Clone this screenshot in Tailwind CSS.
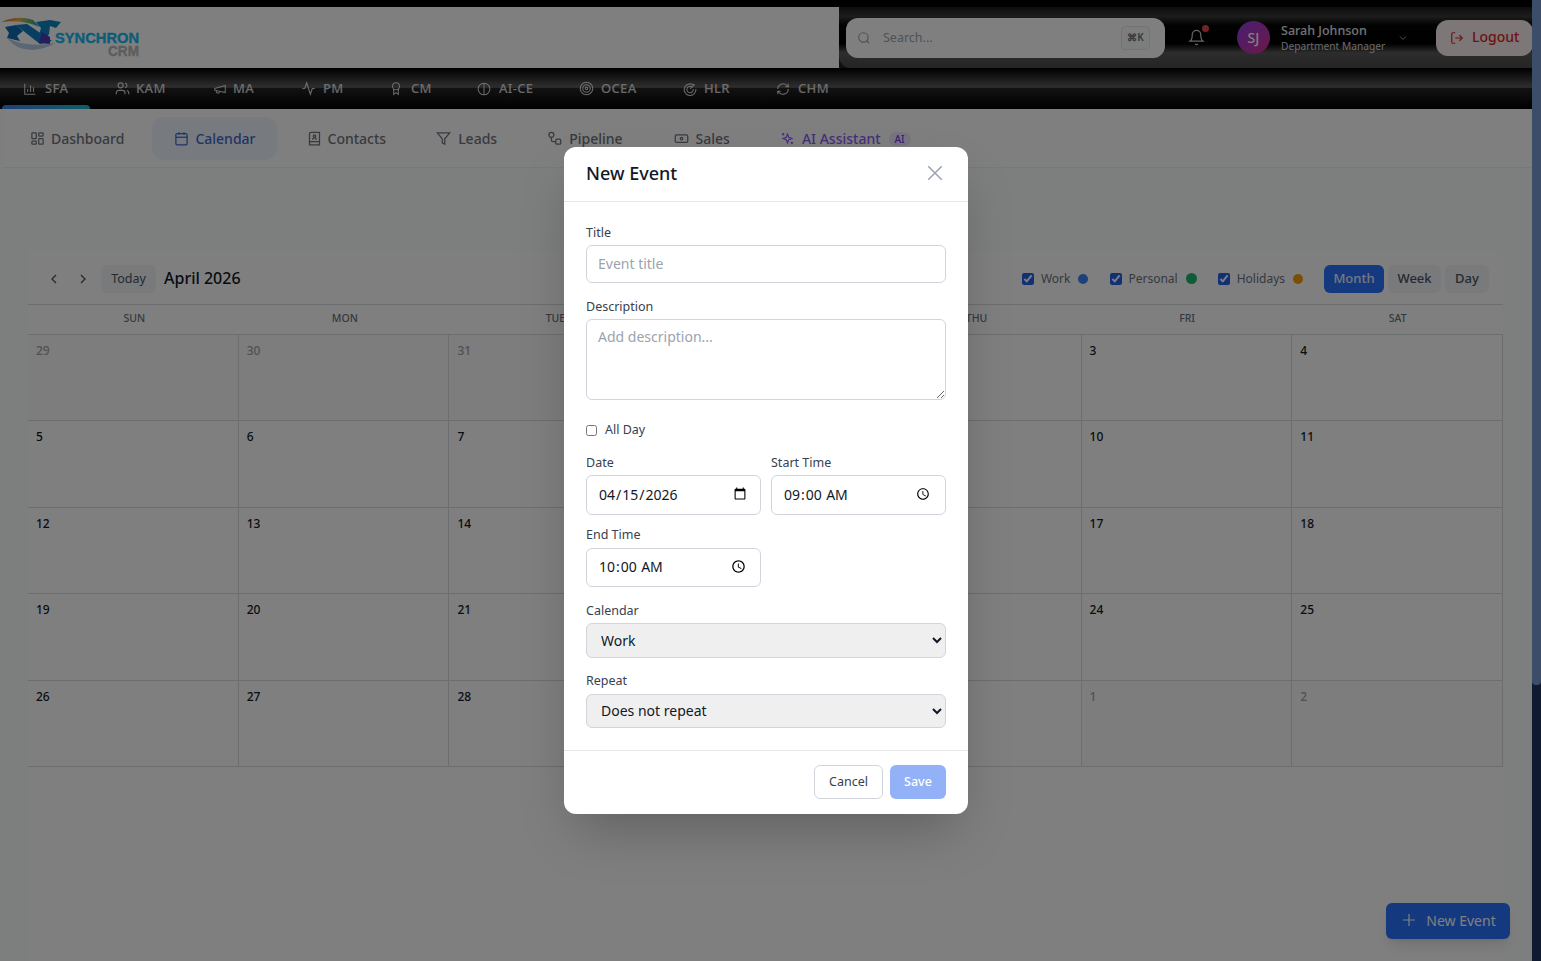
<!DOCTYPE html>
<html lang="en">
<head>
  <meta charset="UTF-8">
  <title>Synchron CRM - Calendar</title>
  <script src="https://cdn.jsdelivr.net/npm/@tailwindcss/browser@4"></script>
</head>
<body class="h-screen overflow-hidden bg-[#0f1a30] font-['Noto_Sans',sans-serif]">
<div class="flex h-screen">
  <div class="relative w-[1532px] h-full overflow-hidden bg-[#fbfdfc]">

    <!-- top header -->
    <header class="h-[68px] pt-[7px] bg-[linear-gradient(#000,#222)] flex">
      <div class="w-[839px] shrink-0 h-[61px] bg-white">
        <svg width="142" height="50" viewBox="0 14 142 50" class="mt-[7px] block">
          <defs>
            <linearGradient id="arc" x1="0" x2="1" y1="0" y2="0"><stop offset="0" stop-color="#e06a30"/><stop offset=".45" stop-color="#e8b040"/><stop offset=".8" stop-color="#50b080"/><stop offset="1" stop-color="#1090c0"/></linearGradient>
          </defs>
          <path d="M1.5 22 C10 17.5 22 16 33 20 L40 27 C28 21.5 12 20 1.5 22Z" fill="url(#arc)"/>
          <path d="M36 22 L50 20 L61 22 L56 28 L50 26 L49 34 L42 44 L38 38 L41 28Z" fill="#0c86c0"/>
          <path d="M16 25 L27 24 L52 41 L40 44 L26 33Z" fill="#0e7cc4"/>
          <path d="M5 27 L16 25 L23 31 L17 36 L20 41 L7 38 L9 33Z" fill="#0e6cb0"/>
          <path d="M42 32 L50 37 L50 44 L39 43Z" fill="#4a3ab8"/>
          <path d="M7 38 C18 43 30 47 55 43 C45 50 28 52 18 47 C14 45 10 42 7 38Z" fill="#b4cce4"/>
          <text x="55" y="43" font-family="Liberation Sans" font-weight="700" font-size="15.5" stroke="#14b8f0" stroke-width=".35" textLength="84" lengthAdjust="spacingAndGlyphs" fill="#14b8f0">SYNCHRON</text>
          <text x="108" y="56" font-family="Liberation Sans" font-weight="700" font-size="15" stroke="#b8b8b8" stroke-width=".3" textLength="31" lengthAdjust="spacingAndGlyphs" fill="#b8b8b8">CRM</text>
        </svg>
      </div>
      <div class="flex-1 min-w-0 h-[61px] overflow-hidden rounded-bl-xl bg-[linear-gradient(#1a1a1a_0%,#3a3a3a_15%,#050505_30%,#000_60%,#5a5a5a_75%,#4a4a4a_100%)] flex items-center pl-[7px]">
        <div class="w-[319px] h-10 shrink-0 rounded-xl bg-white flex items-center pl-[11px] pr-[15px] text-[#9ca3af]">
          <svg class="w-[14px] h-[14px] mr-[12px] shrink-0" viewBox="0 0 24 24" fill="none" stroke="currentColor" stroke-width="2"><circle cx="11" cy="11" r="8"/><path d="m21 21-4.3-4.3"/></svg>
          <span class="flex-1 pt-[2px] text-[12.5px]">Search...</span>
          <span class="w-[29px] h-6 border border-[#e5e7eb] rounded bg-[#f9fafb] flex items-center justify-center text-[10px] font-semibold text-[#6b7280]">⌘K</span>
        </div>
        <div class="relative ml-[23px] w-4 h-5 shrink-0 text-white/80">
          <svg class="w-[17px] h-[19px]" viewBox="0 0 24 24" fill="none" stroke="currentColor" stroke-width="1.7"><path d="M6 8a6 6 0 0 1 12 0c0 7 3 9 3 9H3s3-2 3-9"/><path d="M10.3 21a1.94 1.94 0 0 0 3.4 0"/></svg>
          <span class="absolute -top-[3px] left-[14px] w-[7px] h-[7px] rounded-full bg-[#ef4444]"></span>
        </div>
        <div class="ml-[33px] w-[33px] h-[33px] shrink-0 rounded-full bg-[linear-gradient(135deg,#8b3fe0,#db2f9a)] flex items-center justify-center text-white text-[14px] font-medium">SJ</div>
        <div class="ml-[11px] w-[115px] pt-[1px] shrink-0">
          <div class="text-[12.5px] font-medium text-[#e5e7eb] leading-[15px]">Sarah Johnson</div>
          <div class="mt-[1px] text-[10.2px] text-[#d1d5db] leading-[15px] whitespace-nowrap">Department Manager</div>
        </div>
        <svg class="ml-[1px] w-3 h-3 shrink-0 text-[#9ca3af]" viewBox="0 0 24 24" fill="none" stroke="currentColor" stroke-width="2"><path d="m6 9 6 6 6-6"/></svg>
        <div class="ml-[27px] w-[97px] h-9 shrink-0 rounded-xl bg-[#fbeeee] flex items-center pl-[14px] gap-[8px] text-[#dc2626] text-[14px] font-medium">
          <svg class="w-[14px] h-[14px]" viewBox="0 0 24 24" fill="none" stroke="currentColor" stroke-width="2"><path d="M9 21H5a2 2 0 0 1-2-2V5a2 2 0 0 1 2-2h4"/><path d="m16 17 5-5-5-5"/><path d="M21 12H9"/></svg>
          <span class="-mt-[2px]">Logout</span>
        </div>
      </div>
    </header>

    <!-- module nav -->
    <nav class="h-[41px] bg-[linear-gradient(#000_0%,#5e5e5e_47%,#242424_50%,#000_100%)] flex gap-1 pl-[2px] text-[13px] font-medium tracking-wide text-white/80">
      <a class="relative h-full w-[88px] pl-[21px] flex items-center gap-2">
        <svg class="w-[14px] h-[14px]" viewBox="0 0 24 24" fill="none" stroke="currentColor" stroke-width="1.8"><path d="M3 3v18h18"/><path d="M8 17v-5M13 17V6M18 17v-8"/></svg>SFA
        <span class="absolute left-0 right-0 bottom-0 h-1 rounded-t bg-[linear-gradient(90deg,#3b82f6,#22b8cf)]"></span>
      </a>
      <a class="h-full w-[94px] pl-[21px] flex items-center gap-[6px]">
        <svg class="w-[15px] h-[15px]" viewBox="0 0 24 24" fill="none" stroke="currentColor" stroke-width="1.8"><path d="M16 21v-2a4 4 0 0 0-4-4H6a4 4 0 0 0-4 4v2"/><circle cx="9" cy="7" r="4"/><path d="M22 21v-2a4 4 0 0 0-3-3.9M16 3.1a4 4 0 0 1 0 7.8"/></svg>KAM
      </a>
      <a class="h-full w-[84px] pl-[21px] flex items-center gap-[6px]">
        <svg class="w-[14px] h-[14px]" viewBox="0 0 24 24" fill="none" stroke="currentColor" stroke-width="1.8"><path d="m3 11 18-5v12L3 14z"/><path d="M11.6 16.8a3 3 0 1 1-5.8-1.6"/></svg>MA
      </a>
      <a class="h-full w-[84px] pl-[21px] flex items-center gap-[7px]">
        <svg class="w-[15px] h-[15px]" viewBox="0 0 24 24" fill="none" stroke="currentColor" stroke-width="1.8"><path d="M22 12h-4l-3 9L9 3l-3 9H2"/></svg>PM
      </a>
      <a class="h-full w-[84px] pl-[21px] flex items-center gap-[8px]">
        <svg class="w-[14px] h-[15px]" viewBox="0 0 24 24" fill="none" stroke="currentColor" stroke-width="1.8"><circle cx="12" cy="8" r="6"/><path d="M8 13v9l4-3 4 3v-9"/></svg>CM
      </a>
      <a class="h-full w-[98px] pl-[21px] flex items-center gap-[8px]">
        <svg class="w-[14px] h-[14px]" viewBox="0 0 24 24" fill="none" stroke="currentColor" stroke-width="1.8"><circle cx="12" cy="12" r="10"/><path d="M12 2v20"/></svg>AI-CE
      </a>
      <a class="h-full w-[100px] pl-[21px] flex items-center gap-[7px]">
        <svg class="w-[15px] h-[15px]" viewBox="0 0 24 24" fill="none" stroke="currentColor" stroke-width="1.8"><circle cx="12" cy="12" r="10"/><circle cx="12" cy="12" r="6"/><circle cx="12" cy="12" r="2"/></svg>OCEA
      </a>
      <a class="h-full w-[89px] pl-[21px] flex items-center gap-[7px]">
        <svg class="w-[14px] h-[14px]" viewBox="0 0 24 24" fill="none" stroke="currentColor" stroke-width="1.8"><path d="M19 6a10 10 0 1 0 3 6"/><path d="M16 9a5.5 5.5 0 1 0 1.5 3"/><path d="m12 12 8-8"/></svg>HLR
      </a>
      <a class="h-full w-[92px] pl-[21px] flex items-center gap-[8px]">
        <svg class="w-[14px] h-[14px]" viewBox="0 0 24 24" fill="none" stroke="currentColor" stroke-width="1.8"><path d="M3 12a9 9 0 0 1 15-6.7L21 8"/><path d="M21 3v5h-5"/><path d="M21 12a9 9 0 0 1-15 6.7L3 16"/><path d="M3 21v-5h5"/></svg>CHM
      </a>
    </nav>

    <!-- page tabs -->
    <div class="h-[59px] ml-[3px] bg-white rounded-tl-lg border-b border-[#eef0f2] flex items-center gap-[6px] pl-[5px] text-[14px] font-medium text-[#6f747c]">
      <a class="h-[43px] pl-[22px] pr-[22px] pt-[1px] flex items-center gap-[6px]">
        <svg class="w-[15px] h-[15px]" viewBox="0 0 24 24" fill="none" stroke="currentColor" stroke-width="2"><rect x="3" y="3" width="7" height="9" rx="1"/><rect x="14" y="3" width="7" height="5" rx="1"/><rect x="14" y="12" width="7" height="9" rx="1"/><rect x="3" y="16" width="7" height="5" rx="1"/></svg>Dashboard
      </a>
      <a class="h-[43px] pl-[22px] pr-[21px] pt-[1px] rounded-xl bg-[#eff6ff] text-[#3f68cc] flex items-center gap-[6px]">
        <svg class="w-[15px] h-[15px]" viewBox="0 0 24 24" fill="none" stroke="currentColor" stroke-width="2"><path d="M8 2v4M16 2v4"/><rect x="3" y="4" width="18" height="18" rx="2"/><path d="M3 10h18"/></svg>Calendar
      </a>
      <a class="h-[43px] pl-[24px] pr-[22px] pt-[1px] flex items-center gap-[6px]">
        <svg class="w-[15px] h-[15px]" viewBox="0 0 24 24" fill="none" stroke="currentColor" stroke-width="2"><path d="M4 19.5A2.5 2.5 0 0 1 6.5 17H20V2H6.5A2.5 2.5 0 0 0 4 4.5V22h16v-5"/><circle cx="12" cy="8" r="2"/><path d="M9 14a3 3 0 0 1 6 0"/></svg>Contacts
      </a>
      <a class="h-[43px] px-[22px] pt-[1px] flex items-center gap-[7px]">
        <svg class="w-[15px] h-[15px]" viewBox="0 0 24 24" fill="none" stroke="currentColor" stroke-width="2"><path d="M22 3H2l8 9.5V19l4 2v-8.5z"/></svg>Leads
      </a>
      <a class="h-[43px] px-[22px] pt-[1px] flex items-center gap-[7px]">
        <svg class="w-[15px] h-[15px]" viewBox="0 0 24 24" fill="none" stroke="currentColor" stroke-width="2"><circle cx="7" cy="6" r="4"/><path d="M7 10v4a3 3 0 0 0 3 3h3"/><rect x="14" y="13" width="8" height="8" rx="2"/></svg>Pipeline
      </a>
      <a class="h-[43px] pl-[23px] pr-[22px] pt-[1px] flex items-center gap-[7px]">
        <svg class="w-[15px] h-[15px]" viewBox="0 0 24 24" fill="none" stroke="currentColor" stroke-width="2"><rect x="2" y="6" width="20" height="12" rx="2"/><circle cx="12" cy="12" r="2"/><path d="M6 12h.01M18 12h.01"/></svg>Sales
      </a>
      <a class="h-[43px] px-[22px] pt-[1px] flex items-center gap-[7px] text-[#8b5cf6]">
        <svg class="w-[15px] h-[15px]" viewBox="0 0 24 24" fill="none" stroke="currentColor" stroke-width="2"><path d="m12 5 2 5 5 2-5 2-2 5-2-5-5-2 5-2z"/><path d="M5 3v4M3 5h4M19 17v4M17 19h4"/></svg>AI Assistant
        <span class="ml-[1px] px-[6px] rounded-full bg-[#ede9fe] text-[10px] leading-[14px] text-[#7c3aed]">AI</span>
      </a>
    </div>

    <!-- calendar -->
    <main class="ml-[28px] mr-[29px] mt-[82px] h-full bg-white">
      <div class="h-[55px] pt-[3px] flex items-center pl-[18px] pr-[14px] border-b border-[#d8dadd]">
        <svg class="w-[16px] h-[16px] text-[#4b5563]" viewBox="0 0 24 24" fill="none" stroke="currentColor" stroke-width="2"><path d="m15 18-6-6 6-6"/></svg>
        <svg class="ml-[13px] w-[16px] h-[16px] text-[#4b5563]" viewBox="0 0 24 24" fill="none" stroke="currentColor" stroke-width="2"><path d="m9 18 6-6-6-6"/></svg>
        <button class="ml-[10px] w-[55px] h-7 pt-[2px] rounded-md bg-[#f3f4f6] text-[12.5px] text-[#4b5563]">Today</button>
        <h2 class="ml-2 -mt-[2px] text-[16px] font-medium text-[#111827]">April 2026</h2>
        <label class="ml-auto flex items-center text-[12px] text-[#6b7280]"><input type="checkbox" checked class="w-[12px] h-[12px] accent-[#2563eb]"><span class="ml-[7px]">Work</span><span class="ml-2 w-[10px] h-[10px] rounded-full bg-[#3b82f6]"></span></label>
        <label class="ml-[22px] flex items-center text-[12px] text-[#6b7280]"><input type="checkbox" checked class="w-[12px] h-[12px] accent-[#2563eb]"><span class="ml-[6px]">Personal</span><span class="ml-2 w-[11px] h-[11px] rounded-full bg-[#22b573]"></span></label>
        <label class="ml-[21px] flex items-center text-[12px] text-[#6b7280]"><input type="checkbox" checked class="w-[12px] h-[12px] accent-[#2563eb]"><span class="ml-[7px]">Holidays</span><span class="ml-2 w-[10px] h-[10px] rounded-full bg-[#f59e0b]"></span></label>
        <button class="ml-[21px] w-[60px] h-7 rounded-md bg-[#2a72ff] text-[13px] font-medium text-white/90">Month</button>
        <button class="ml-1 w-[53px] h-7 rounded-md bg-[#f3f4f6] text-[13px] font-medium text-[#4b5563]">Week</button>
        <button class="ml-1 w-[44px] h-7 rounded-md bg-[#f3f4f6] text-[13px] font-medium text-[#4b5563]">Day</button>
      </div>
      <div class="grid grid-cols-7 h-[30px] pb-[2px] pl-[1px] items-center text-center text-[10.5px] font-medium text-[#6b7280] border-b border-[#d8dadd]">
        <div>SUN</div><div>MON</div><div>TUE</div><div>WED</div><div>THU</div><div>FRI</div><div>SAT</div>
      </div>
      <div id="grid" class="grid grid-cols-7 grid-rows-5 h-[432px]"></div>
    </main>

    <button class="absolute left-[1386px] top-[903px] w-[124px] h-9 pb-[2px] rounded-md bg-[#2a72ff] text-white text-[14px] flex items-center justify-center gap-[8px] shadow-lg">
      <svg class="w-[18px] h-[18px]" viewBox="0 0 24 24" fill="none" stroke="currentColor" stroke-width="1.6"><path d="M4 12h16M12 4v16"/></svg>New Event
    </button>

    <!-- modal overlay -->
    <div class="absolute inset-0 bg-black/50 flex items-center justify-center">
      <div class="w-[404px] h-[667px] bg-white rounded-xl shadow-2xl text-[#374151]">
        <div class="h-[55px] pb-[2px] flex items-center justify-between px-[22px] border-b border-[#e5e7eb]">
          <h3 class="text-[18px] font-medium text-[#111827]">New Event</h3>
          <svg class="w-[18px] h-[18px] mr-[2px] text-[#9ca3af]" viewBox="0 0 24 24" fill="none" stroke="currentColor" stroke-width="2"><path d="M3 3l18 18M21 3 3 21"/></svg>
        </div>
        <div class="px-[22px] pt-[22px] text-[12.5px]">
          <label class="block leading-[18px] mb-[3px]">Title</label>
          <input type="text" placeholder="Event title" class="block w-full h-[38px] pb-[2px] px-[11px] text-[14px] border border-[#d1d5db] rounded-md placeholder:text-[#9ca3af]">
          <label class="block mt-[15px] leading-[18px] mb-[3px]">Description</label>
          <textarea placeholder="Add description..." class="block w-full h-[81px] px-[11px] py-[6px] text-[14px] border border-[#d1d5db] rounded-md placeholder:text-[#9ca3af]"></textarea>
          <label class="mt-[21px] h-[18px] flex items-center gap-[8px]"><input type="checkbox" class="w-[11px] h-[11px]">All Day</label>
          <div class="grid grid-cols-2 gap-x-[10px] mt-[15px]">
            <div>
              <label class="block leading-[18px] mb-[3px]">Date</label>
              <input type="date" value="2026-04-15" class="block w-full h-10 pb-[2px] px-[11px] text-[14px] text-[#111827] border border-[#d1d5db] rounded-md">
            </div>
            <div>
              <label class="block leading-[18px] mb-[3px]">Start Time</label>
              <input type="time" value="09:00" class="block w-full h-10 pb-[2px] px-[11px] text-[14px] text-[#111827] border border-[#d1d5db] rounded-md">
            </div>
            <div class="mt-[11px]">
              <label class="block leading-[18px] mb-[4px]">End Time</label>
              <input type="time" value="10:00" class="block w-full h-[39px] pb-[2px] px-[11px] text-[14px] text-[#111827] border border-[#d1d5db] rounded-md">
            </div>
          </div>
          <label class="block mt-[15px] leading-[18px] mb-[3px]">Calendar</label>
          <select class="block w-full h-[35px] px-[10px] text-[14px] text-[#111827] bg-[#efefef] border border-[#d1d5db] rounded-md"><option>Work</option></select>
          <label class="block mt-[14px] leading-[18px] mb-[4px]">Repeat</label>
          <select class="block w-full h-[34px] pb-[2px] px-[10px] text-[14px] text-[#111827] bg-[#efefef] border border-[#d1d5db] rounded-md"><option>Does not repeat</option></select>
        </div>
        <div class="mt-[22px] h-[64px] pb-[2px] border-t border-[#e5e7eb] flex items-center justify-end gap-[7px] px-[22px] text-[12.5px]">
          <button class="w-[69px] h-[34px] pt-[2px] rounded-md border border-[#d1d5db] text-[#374151]">Cancel</button>
          <button class="w-[56px] h-[34px] pt-[2px] rounded-md bg-[#93b1f6] text-white font-medium">Save</button>
        </div>
      </div>
    </div>
  </div>

  <!-- scrollbar -->
  <div class="w-[9px] h-[685px] bg-[#3b4d68] rounded-b"></div>
</div>

<script>
  const days = [29,30,31,1,2,3,4,5,6,7,8,9,10,11,12,13,14,15,16,17,18,19,20,21,22,23,24,25,26,27,28,29,30,1,2];
  const grid = document.getElementById('grid');
  days.forEach((day, i) => {
    const muted = i < 3 || i > 32;
    const cell = document.createElement('div');
    cell.className = muted
      ? 'p-2 text-[12px] font-medium leading-[16px] border-r border-b border-[#d8dadd] bg-[#f8fbf9] text-[#9ca3af]'
      : 'p-2 text-[12px] font-medium leading-[16px] border-r border-b border-[#d8dadd] text-[#111827]';
    cell.textContent = day;
    grid.appendChild(cell);
  });
</script>
</body>
</html>
